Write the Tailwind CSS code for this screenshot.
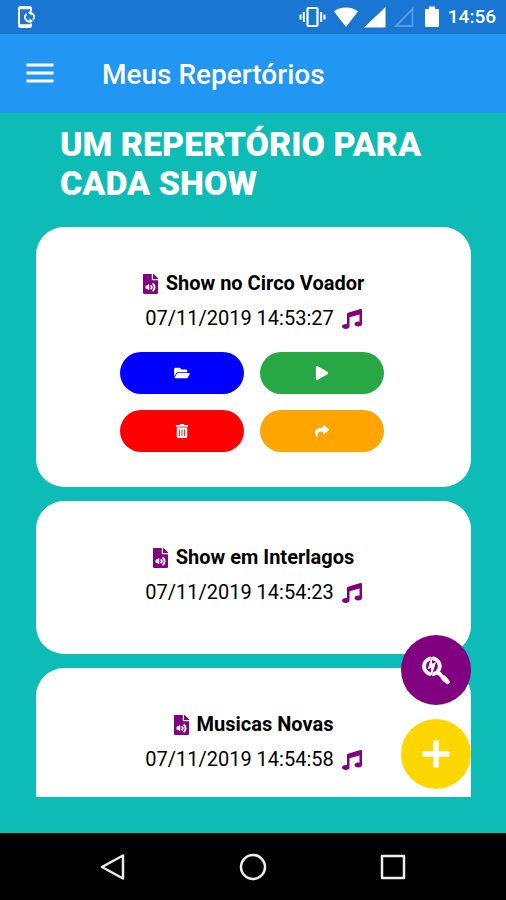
<!DOCTYPE html>
<html lang="pt-BR">
  <head>
    <meta charset="UTF-8" />
    <meta name="viewport" content="width=device-width, initial-scale=1.0" />
    <title>Meus Repertórios</title>
    <script src="https://cdn.jsdelivr.net/npm/@tailwindcss/browser@4"></script>
  </head>
  <body
    class="flex h-screen flex-col overflow-hidden bg-[#0dbcb6] font-['Roboto',sans-serif] text-black"
  >
    <!-- icons used more than once -->
    <svg class="hidden">
      <symbol id="file-audio" viewBox="0 0 384 512">
        <path
          d="M224 136V0H24C10.7 0 0 10.7 0 24v464c0 13.3 10.7 24 24 24h336c13.3 0 24-10.7 24-24V160H248c-13.2 0-24-10.8-24-24zm-64 268c0 10.7-12.9 16-20.5 8.5L104 376H76c-6.6 0-12-5.4-12-12v-56c0-6.6 5.4-12 12-12h28l35.5-36.5c7.6-7.6 20.5-2.2 20.5 8.5v136zm33.2-47.6c9.1-9.3 9.1-24.1 0-33.4-22.1-22.8 12.2-56.2 34.4-33.5 27.2 27.9 27.2 72.4 0 100.4-21.8 22.3-56.9-10.4-34.4-33.5zm86-117.1c54.4 55.9 54.4 144.8 0 200.8-21.8 22.4-57-10.3-34.4-33.5 36.2-37.2 36.3-96.5 0-133.8-22.1-22.8 12.3-56.3 34.4-33.5zM384 121.9v6.1H256V0h6.1c6.4 0 12.5 2.5 17 7l97.9 98c4.5 4.5 7 10.6 7 16.9z"
        />
      </symbol>
      <symbol id="music" viewBox="0 0 512 512">
        <path
          d="M511.99 32.01c0-21.71-21.1-37.01-41.6-30.51L150.4 96c-13.3 4.2-22.4 16.5-22.4 30.5v261.42c-10.05-2.38-20.72-3.92-32-3.92-53.02 0-96 28.65-96 64s42.98 64 96 64 96-28.65 96-64V214.31l256-75.02v184.63c-10.05-2.38-20.72-3.92-32-3.92-53.02 0-96 28.65-96 64s42.98 64 96 64 96-28.65 96-64l-.01-351.99z"
        />
      </symbol>
    </svg>

    <div class="flex h-[34px] shrink-0 items-center justify-between bg-[#1976d2] pr-2.5 pl-4 text-white">
      <svg class="h-6 w-5" viewBox="0 0 20 24" fill="none" stroke="currentColor">
        <path d="M15 6V3.500a1.500 1.500 0 0 0-1.500-1.500h-9A1.500 1.500 0 0 0 3 3.500v17A1.500 1.500 0 0 0 4.500 22h9a1.500 1.500 0 0 0 1.500-1.500V18.500" stroke-width="2" />
        <path d="M3 3h12M3 20.500h12" stroke-width="2.500" />
        <path d="M10.500 9a4.200 4.200 0 0 0 4 7.200M14.500 7.800a4.200 4.200 0 0 1 2.500 7" stroke-width="1.800" />
        <path d="M15.500 5v5.500L12 7.800zM13.500 13.500v5l3.500-2.500z" fill="currentColor" stroke="none" />
      </svg>
      <div class="flex items-center">
        <svg class="h-6 w-[27px]" viewBox="0 0 27 24" fill="none" stroke="currentColor">
          <rect x="8.500" y="3" width="10" height="18" rx="1" stroke-width="2.200" />
          <path d="M4.800 7v10M22.200 7v10" stroke-width="2" />
          <path d="M1.500 9.500v5M25.500 9.500v5" stroke-width="2" />
        </svg>
        <svg class="ml-2 h-6 w-6" viewBox="0 0 24 24" fill="currentColor">
          <path d="M12 22L0 6.500C3 4 7 2.500 12 2.500S21 4 24 6.500z" />
        </svg>
        <svg class="ml-1.5 h-6 w-[22px]" viewBox="0 0 22 24" fill="currentColor">
          <path d="M0 22.500L21.500 2v20.500z" />
        </svg>
        <svg class="ml-2 h-6 w-[22px] text-[#5a9ce0]" viewBox="0 0 22 24" fill="none" stroke="currentColor">
          <path d="M2 21L18.500 4v17z" stroke-width="1.800" />
        </svg>
        <svg class="ml-2 h-6 w-4" viewBox="0 0 16 24" fill="currentColor">
          <path d="M5 1.500h6V4h3a1 1 0 0 1 1 1v16a1 1 0 0 1-1 1H2a1 1 0 0 1-1-1V5a1 1 0 0 1 1-1h3z" />
        </svg>
        <span class="ml-2 text-[19px] leading-6 font-medium">14:56</span>
      </div>
    </div>

    <header class="flex h-[79px] shrink-0 items-center bg-[#2196f3] pt-0.5 pl-[26px] text-white">
      <button type="button" aria-label="Menu" class="mr-12 pb-1">
        <svg class="h-6 w-7" viewBox="0 0 28 24" stroke="currentColor" stroke-width="3">
          <path d="M.5 4h27M.5 12h27M.5 20h27" />
        </svg>
      </button>
      <h1 class="text-[28px] leading-8 font-medium">Meus Repertórios</h1>
    </header>

    <main class="relative flex min-h-0 flex-1 flex-col pr-[35px] pb-9 pl-9">
      <h2
        class="shrink-0 px-6 pt-3 pb-6 text-[34px] leading-[39px] font-black text-white uppercase"
      >
        Um repertório para cada show
      </h2>

      <div class="flex min-h-0 flex-1 flex-col gap-3.5 overflow-hidden">
        <section class="shrink-0 rounded-[28px] bg-white px-4 pt-[39px] pb-[35px]">
          <h3 class="flex items-center justify-center gap-2 text-[20px] leading-[35px] font-bold">
            <svg class="h-5 w-[15px] fill-[#800080]"><use href="#file-audio" /></svg>
            Show no Circo Voador
          </h3>
          <p class="flex items-center justify-center gap-2 text-[20px] leading-[35px]">
            07/11/2019 14:53:27
            <svg class="h-5 w-5 fill-[#800080]"><use href="#music" /></svg>
          </p>
          <div class="mx-auto mt-4 grid max-w-[268px] grid-cols-2 gap-4 pr-1 text-white">
            <button type="button" aria-label="Abrir" class="flex h-[42px] items-center justify-center rounded-full bg-[#0000ff]">
              <svg class="h-3.5 w-4" viewBox="0 0 576 512" fill="currentColor">
                <path
                  d="M572.694 292.093L500.27 416.248A63.997 63.997 0 0 1 444.989 448H45.025c-18.523 0-30.064-20.093-20.731-36.093l72.424-124.155A64 64 0 0 1 152 256h399.964c18.523 0 30.064 20.093 20.73 36.093zM152 224h328v-48c0-26.51-21.49-48-48-48H272l-64-64H48C21.49 64 0 85.49 0 112v278.046l69.077-118.418C86.214 242.25 117.989 224 152 224z"
                />
              </svg>
            </button>
            <button type="button" aria-label="Tocar" class="flex h-[42px] items-center justify-center rounded-full bg-[#28a745]">
              <svg class="h-3.5 w-4" viewBox="0 0 448 512" fill="currentColor">
                <path
                  d="M424.400 214.700L72.400 6.600C43.800-10.300 0 6.100 0 47.900V464c0 37.500 40.700 60.100 72.400 41.300l352-208c31.400-18.500 31.500-64.100 0-82.600z"
                />
              </svg>
            </button>
            <button type="button" aria-label="Excluir" class="flex h-[42px] items-center justify-center rounded-full bg-[#ff0000]">
              <svg class="h-3.5 w-4" viewBox="0 0 448 512" fill="currentColor">
                <path
                  d="M32 464a48 48 0 0 0 48 48h288a48 48 0 0 0 48-48V128H32zm272-256a16 16 0 0 1 32 0v224a16 16 0 0 1-32 0zm-96 0a16 16 0 0 1 32 0v224a16 16 0 0 1-32 0zm-96 0a16 16 0 0 1 32 0v224a16 16 0 0 1-32 0zM432 32H312l-9.400-18.700A24 24 0 0 0 281.100 0H166.800a23.720 23.720 0 0 0-21.400 13.300L136 32H16A16 16 0 0 0 0 48v32a16 16 0 0 0 16 16h416a16 16 0 0 0 16-16V48a16 16 0 0 0-16-16z"
                />
              </svg>
            </button>
            <button type="button" aria-label="Compartilhar" class="flex h-[42px] items-center justify-center rounded-full bg-[#ffa500]">
              <svg class="h-3.5 w-4" viewBox="0 0 512 512" fill="currentColor">
                <path
                  d="M503.691 189.836L327.687 37.851C312.281 24.546 288 35.347 288 56.015v80.053C127.371 137.907 0 170.100 0 322.326c0 61.441 39.581 122.309 83.333 154.132 13.653 9.931 33.111-2.533 28.077-18.631C66.066 312.814 132.917 274.316 288 272.085V360c0 20.700 24.300 31.453 39.687 18.164l176.004-152c11.071-9.562 11.086-26.753 0-36.328z"
                />
              </svg>
            </button>
          </div>
        </section>

        <section class="shrink-0 rounded-[28px] bg-white px-4 pt-[39px] pb-11">
          <h3 class="flex items-center justify-center gap-2 text-[20px] leading-[35px] font-bold">
            <svg class="h-5 w-[15px] fill-[#800080]"><use href="#file-audio" /></svg>
            Show em Interlagos
          </h3>
          <p class="flex items-center justify-center gap-2 text-[20px] leading-[35px]">
            07/11/2019 14:54:23
            <svg class="h-5 w-5 fill-[#800080]"><use href="#music" /></svg>
          </p>
        </section>

        <section class="shrink-0 rounded-[28px] bg-white px-4 pt-[39px] pb-11">
          <h3 class="flex items-center justify-center gap-2 text-[20px] leading-[35px] font-bold">
            <svg class="h-5 w-[15px] fill-[#800080]"><use href="#file-audio" /></svg>
            Musicas Novas
          </h3>
          <p class="flex items-center justify-center gap-2 text-[20px] leading-[35px]">
            07/11/2019 14:54:58
            <svg class="h-5 w-5 fill-[#800080]"><use href="#music" /></svg>
          </p>
        </section>
      </div>

      <!-- floating buttons -->
      <div class="absolute right-[35px] bottom-11 flex flex-col gap-3.5 text-white">
        <button type="button" aria-label="Buscar" class="flex size-[70px] items-center justify-center rounded-full bg-[#800080]">
          <svg class="h-[30px] w-7" viewBox="0 0 460 512" fill="currentColor" stroke="currentColor" stroke-width="14">
            <path
              d="M220.600 130.300l-67.200 28.200V43.200L98.700 233.500l54.700-24.200v130.300l67.200-209.300zm-83.200-96.700l-1.300 4.700-15.200 52.900C80.600 106.700 52 145.800 52 191.500c0 52.300 34.300 95.900 83.400 105.500v53.600C57.500 340.100 0 272.400 0 191.600c0-80.500 59.800-147.200 137.400-158zm311.400 447.200c-11.200 11.200-23.100 12.300-28.600 10.500-5.400-1.800-27.100-19.900-60.400-44.400-33.300-24.600-33.600-35.700-43-56.700-9.400-20.900-30.400-42.600-57.500-52.400l-9.700-14.700c-24.700 16.900-53 26.900-81.300 28.700l2.100-6.600 15.900-49.500c46.500-11.900 80.900-54 80.900-104.200 0-54.500-38.400-102.100-96-107.100V32.300C254.400 37.400 320 106.800 320 191.600c0 33.600-11.200 64.700-29 90.400l14.600 9.600c9.800 27.100 31.500 48 52.400 57.400s32.200 9.700 56.800 43c24.600 33.200 42.700 54.900 44.500 60.300s.7 17.300-10.500 28.500zm-9.900-17.900c0-4.400-3.600-8-8-8s-8 3.600-8 8 3.600 8 8 8 8-3.600 8-8z"
            />
          </svg>
        </button>
        <button type="button" aria-label="Adicionar" class="flex size-[70px] items-center justify-center rounded-full bg-[#ffd700]">
          <svg class="h-7 w-7" viewBox="0 0 28 28" stroke="currentColor" stroke-width="5.500" stroke-linejoin="round">
            <path d="M14 .5v27M.5 14h27" />
          </svg>
        </button>
      </div>
    </main>

    <nav class="flex h-[67px] shrink-0 items-center justify-center gap-28 bg-black text-[#eeeeee]">
      <button type="button" aria-label="Voltar">
        <svg class="h-7 w-7" viewBox="0 0 28 28" fill="none" stroke="currentColor" stroke-width="2.500" stroke-linejoin="round">
          <path d="M24 2.500v23L3 14z" />
        </svg>
      </button>
      <button type="button" aria-label="Início">
        <svg class="h-7 w-7" viewBox="0 0 28 28" fill="none" stroke="currentColor" stroke-width="2.500">
          <circle cx="14" cy="14" r="12" />
        </svg>
      </button>
      <button type="button" aria-label="Recentes">
        <svg class="h-7 w-7" viewBox="0 0 28 28" fill="none" stroke="currentColor" stroke-width="2.500" stroke-linejoin="round">
          <rect x="3" y="3" width="22" height="22" />
        </svg>
      </button>
    </nav>
  </body>
</html>
